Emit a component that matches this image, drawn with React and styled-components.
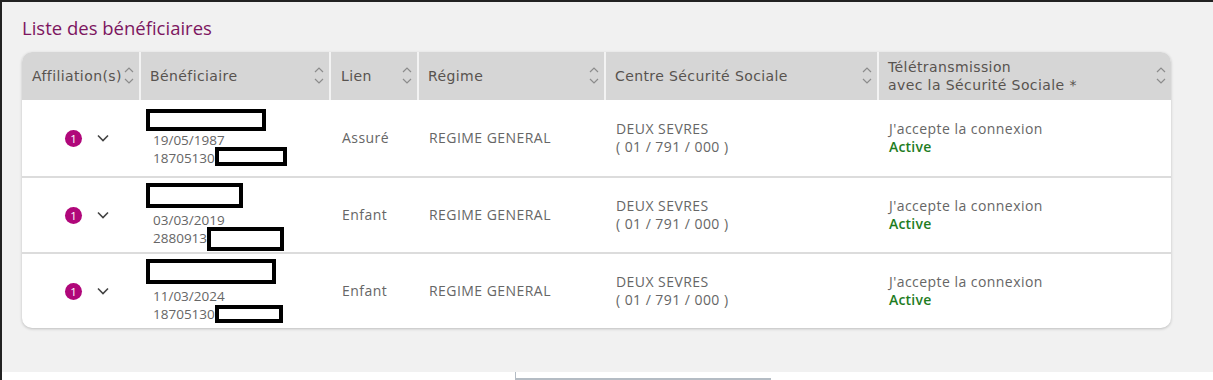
import React from "react";
import styled, { createGlobalStyle } from "styled-components";

const GlobalStyle = createGlobalStyle`
  html, body {
    margin: 0;
    padding: 0;
    background: #ffffff;
  }
  body {
    font-family: "Open Sans", "DejaVu Sans", sans-serif;
  }
`;

const Frame = styled.div`
  width: 1211px;
  height: 378px;
  border-top: 2px solid #222;
  border-left: 2px solid #222;
  display: flex;
  flex-direction: column;
`;

const Main = styled.main`
  height: 370px;
  background: #f1f1f1;
  padding: 14px 0 0 20px;
  box-sizing: border-box;
`;

const Title = styled.h2`
  margin: 0 0 13px 0;
  font-family: "Open Sans", sans-serif;
  font-weight: 400;
  font-size: 18.5px;
  line-height: 23px;
  color: #7d1660;
`;

const Card = styled.div`
  width: 1149px;
  background: #fff;
  border-radius: 10px;
  box-shadow: 0 1px 3px rgba(0, 0, 0, 0.22);
  overflow: hidden;
`;

const Grid = styled.div`
  display: grid;
  grid-template-columns: 117px 190px 88px 187px 273px 294px;
`;

const Head = styled.div`
  height: 48px;
  background: #d6d6d6;
  display: flex;
  align-items: center;
  justify-content: space-between;
  padding: 0 5px 0 ${p => p.$pl || 9}px;
  box-sizing: border-box;
  border-left: ${p => (p.$first ? "none" : "2px solid #f3f3f3")};
  font-family: "DejaVu Sans", sans-serif;
  font-size: 14px;
  line-height: 18px;
  color: #58534f;
  letter-spacing: 0.4px;
`;

const HeadLabel = styled.span`
  white-space: nowrap;
`;

const Cell = styled.div`
  height: 76px;
  box-sizing: border-box;
  border-top: ${p => (p.$firstRow ? "none" : "2px solid #dcdcdc")};
  display: flex;
  flex-direction: column;
  justify-content: center;
  padding-left: ${p => p.$pl || 12}px;
  font-family: "Open Sans", sans-serif;
  font-size: 14px;
  line-height: 18.5px;
  letter-spacing: 0.45px;
  color: #666;
`;

const PersonCell = styled(Cell)`
  font-size: 13.5px;
  letter-spacing: 0;
`;

const AffCell = styled(Cell)`
  flex-direction: row;
  align-items: center;
  justify-content: flex-start;
  gap: 15px;
`;

const Badge = styled.span`
  flex: none;
  display: block;
  width: 17px;
  height: 17px;
  border-radius: 50%;
  background: #b0077a;
  color: #fff;
  font-size: 11.5px;
  line-height: 17px;
  letter-spacing: 0;
  text-align: center;
`;

const Redact = styled.span`
  display: ${p => (p.$block ? "block" : "inline-block")};
  box-sizing: border-box;
  border: 4px solid #000;
  background: #fff;
  width: ${p => p.$w}px;
  height: ${p => p.$h}px;
  margin-left: ${p => p.$ml || 0}px;
  margin-bottom: ${p => p.$mb || 0}px;
  vertical-align: middle;
  margin-top: ${p => (p.$block ? 0 : -6)}px;
  position: relative;
  top: ${p => p.$dy || 0}px;
`;

const Line = styled.div`
  white-space: nowrap;
  height: 18px;
`;

const Active = styled.div`
  color: #1f7d1f;
  font-weight: 600;
  letter-spacing: 0.2px;
`;

const Footer = styled.div`
  height: 8px;
  background: #fff;
  padding-left: 513px;
`;

const FooterBox = styled.div`
  width: 255px;
  height: 6px;
  border-left: 1px solid #b4bcc4;
  border-bottom: 2px solid #b4bcc4;
`;

const SortIcon = () => (
  <svg width="10" height="20" viewBox="0 0 10 20" fill="none" stroke="#8c8c8c" strokeWidth="1.2">
    <polyline points="1,6 5,2 9,6" />
    <polyline points="1,13 5,17 9,13" />
  </svg>
);

const Chevron = () => (
  <svg width="12" height="8" viewBox="0 0 12 8" fill="none" stroke="#444" strokeWidth="1.6">
    <polyline points="1,1.5 6,6.5 11,1.5" />
  </svg>
);

const headers = [
  { label: "Affiliation(s)", pl: 10 },
  { label: "Bénéficiaire" },
  { label: "Lien", pl: 10 },
  { label: "Régime" },
  { label: "Centre Sécurité Sociale" },
  { label: ["Télétransmission", "avec la Sécurité Sociale *"] },
];

const rows = [
  {
    name: { w: 120, h: 22, mb: 0 },
    date: "19/05/1987",
    nss: "18705130",
    nssBox: { w: 72, h: 19, dy: 0 },
    lien: "Assuré",
  },
  {
    name: { w: 97, h: 25, mb: 3 },
    date: "03/03/2019",
    nss: "2880913",
    nssBox: { w: 77, h: 24, dy: 3 },
    lien: "Enfant",
  },
  {
    name: { w: 130, h: 25, mb: 3 },
    date: "11/03/2024",
    nss: "18705130",
    nssBox: { w: 68, h: 18, dy: 2 },
    lien: "Enfant",
  },
];

export default function App() {
  return (
    <>
      <GlobalStyle />
      <Frame>
        <Main>
          <Title>Liste des bénéficiaires</Title>
          <Card>
            <Grid>
              {headers.map((h, i) => (
                <Head key={i} $first={i === 0} $pl={h.pl}>
                  <HeadLabel>
                    {Array.isArray(h.label)
                      ? h.label.map(l => <div key={l}>{l}</div>)
                      : h.label}
                  </HeadLabel>
                  <SortIcon />
                </Head>
              ))}
              {rows.map((r, i) => (
                <React.Fragment key={i}>
                  <AffCell $firstRow={i === 0} $pl={43}>
                    <Badge>1</Badge>
                    <Chevron />
                  </AffCell>
                  <PersonCell $firstRow={i === 0} $pl={14}>
                    <Redact $block $w={r.name.w} $h={r.name.h} $ml={-7} $mb={r.name.mb} />
                    <Line>{r.date}</Line>
                    <Line>
                      {r.nss}
                      <Redact $w={r.nssBox.w} $h={r.nssBox.h} $dy={r.nssBox.dy} />
                    </Line>
                  </PersonCell>
                  <Cell $firstRow={i === 0} $pl={13}>{r.lien}</Cell>
                  <Cell $firstRow={i === 0}>REGIME GENERAL</Cell>
                  <Cell $firstRow={i === 0}>
                    <div>DEUX SEVRES</div>
                    <div>( 01 / 791 / 000 )</div>
                  </Cell>
                  <Cell $firstRow={i === 0}>
                    <div>J'accepte la connexion</div>
                    <Active>Active</Active>
                  </Cell>
                </React.Fragment>
              ))}
            </Grid>
          </Card>
        </Main>
        <Footer>
          <FooterBox />
        </Footer>
      </Frame>
    </>
  );
}
